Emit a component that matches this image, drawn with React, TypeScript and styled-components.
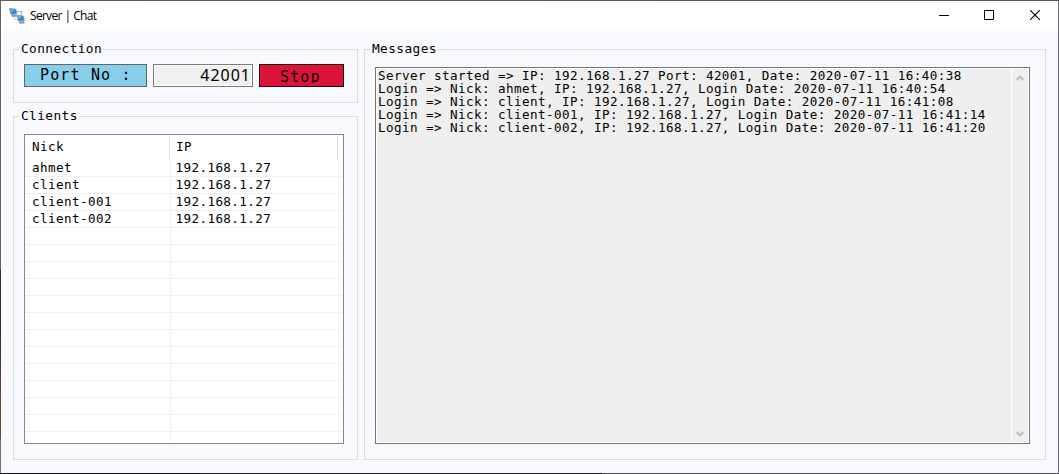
import React from 'react';
import styled, { createGlobalStyle } from 'styled-components';

const GlobalStyle = createGlobalStyle`
  * { box-sizing: border-box; }
  body { margin: 0; background: #f8f8ff; overflow: hidden; }
`;

const mono = `'DejaVu Sans Mono', 'Liberation Mono', monospace`;

const Desktop = styled.div`
  width: 1059px;
  height: 474px;
  padding: 1px;
  background:
    linear-gradient(90deg, #17171c 0 200px, #1b1b22 200px 250px, #1b1b22 250px 602px, #55555d 602px) left bottom / 100% 1px no-repeat,
    linear-gradient(#6b6155 0 270px, #3a2a22 270px 330px, #6a4632 400px 438px, #75705c 440px) left top / 1px 100% no-repeat,
    linear-gradient(90deg, #665b4e, #5c554e) left top / 100% 1px no-repeat,
    #6a6a72;
`;

const Window = styled.div`
  width: 1057px;
  height: 472px;
  display: flex;
  flex-direction: column;
  background: #f8f8ff;
`;

const TitleBar = styled.header`
  display: flex;
  align-items: center;
  height: 30px;
  padding-left: 8px;
  background: #fff;
`;

const Title = styled.span`
  flex: 1;
  margin-left: 4px;
  font: 12px/16px 'Open Sans', 'Noto Sans', sans-serif;
  letter-spacing: -0.7px;
  word-spacing: 0.4px;
  color: #000;
`;

const WindowButton = styled.span`
  display: flex;
  align-self: flex-start;
  width: 46px;
  height: 28px;
  align-items: center;
  justify-content: center;
`;

const Content = styled.main`
  display: flex;
  gap: 6px;
  padding: 18px 0 0 12px;
`;

const Column = styled.div`
  display: flex;
  flex-direction: column;
  gap: 13px;
`;

const Group = styled.section<{ $w: number; $h: number }>`
  width: ${(p) => p.$w}px;
  height: ${(p) => p.$h}px;
  border: 1px solid #dcdcdc;
  padding: 0 10px;
`;

const Legend = styled.h2`
  width: fit-content;
  height: 16px;
  margin: -9px 0 0 -5px;
  padding: 0 1px 0 2px;
  background: #f8f8ff;
  color: #000;
  font: 400 12.8px/16px ${mono};
  letter-spacing: 0.4px;
`;

const ConnectionRow = styled.div`
  display: flex;
  gap: 6px;
  margin-top: 7px;
`;

const Cell = styled.div`
  height: 23px;
  border: 1px solid #646464;
  color: #000;
  font: 15px/21px ${mono};
  letter-spacing: 1.15px;
  white-space: pre;
  overflow: hidden;
`;

const PortLabel = styled(Cell)`
  width: 123px;
  padding-left: 15px;
  background: #87ceeb;
`;

const PortField = styled(Cell)`
  width: 100px;
  padding-right: 1px;
  border-color: #7a7a7a;
  background: #f0f0f0;
  box-shadow: inset 0 0 0 1px #fff;
  text-align: right;
  font: 16px/20px 'Noto Sans', 'Open Sans', sans-serif;
  letter-spacing: 1px;
`;

const StopButton = styled(Cell)`
  width: 85px;
  padding: 1px 0 0 20px;
  border-color: #1c0208;
  background: #dc143c;
`;

const StopText = styled.span`
  display: block;
  height: 17px;
  line-height: 22px;
  overflow: hidden;
`;

const Table = styled.div`
  width: 320px;
  height: 310px;
  margin-top: 10px;
  padding: 1px;
  border: 1px solid #828790;
  background: #fff;
  color: #000;
  font: 12.6px/16px ${mono};
  letter-spacing: 0.415px;
  overflow: hidden;
`;

const HeaderRow = styled.div`
  display: flex;
  height: 24px;
`;

const HeaderCell = styled.div<{ $w: number }>`
  width: ${(p) => p.$w}px;
  padding: 3px 0 0 6px;
  border-right: 1px solid #e3e3e3;
`;

const Rows = styled.div`
  width: 316px;
`;

const Row = styled.div`
  display: flex;
  height: 17px;
  border-bottom: 1px solid #f0f0f0;
`;

const RowCell = styled.div<{ $w: number }>`
  width: ${(p) => p.$w}px;
  height: 17px;
  padding-left: ${(p) => (p.$w > 160 ? 4.4 : 6)}px;
  border-right: 1px solid #f0f0f0;
`;

const Log = styled.div`
  display: flex;
  width: 655px;
  height: 377px;
  margin-top: 10px;
  border: 1px solid #767676;
  padding: 1px;
  background: #fff;
`;

const LogText = styled.pre`
  width: 634px;
  margin: 0;
  padding-left: 1px;
  background: #efefef;
  color: #000;
  font: 12.6px/13px ${mono};
  letter-spacing: 0.415px;
`;

const Scrollbar = styled.div`
  display: flex;
  flex-direction: column;
  justify-content: space-between;
  align-items: center;
  width: 16px;
  margin-left: 1px;
  padding: 5px 0 4px;
  background: #efefef;
`;

const clients = ['ahmet', 'client', 'client-001', 'client-002'];
const tableRows = Array.from({ length: 17 }, (_, i) => clients[i] ?? '');

const messages = [
  'Server started => IP: 192.168.1.27 Port: 42001, Date: 2020-07-11 16:40:38',
  'Login => Nick: ahmet, IP: 192.168.1.27, Login Date: 2020-07-11 16:40:54',
  'Login => Nick: client, IP: 192.168.1.27, Login Date: 2020-07-11 16:41:08',
  'Login => Nick: client-001, IP: 192.168.1.27, Login Date: 2020-07-11 16:41:14',
  'Login => Nick: client-002, IP: 192.168.1.27, Login Date: 2020-07-11 16:41:20',
];

const Monitor = ({ x, y }: { x: number; y: number }) => (
  <g transform={`translate(${x} ${y})`}>
    <path d="M0 .4 6.4 1.2 7.3 6 1.3 6.3Z" fill="#2f86d2" stroke="#7f9cb4" strokeWidth=".8" />
    <path d="M1 1.2 4.5 1.5 2 5Z" fill="#6bb9ef" />
    <path d="M1.4 6.9 6.9 6.5 7.9 8.4 3 8.9Z" fill="#8d9397" />
  </g>
);

const AppIcon = () => (
  <svg width="17" height="16" viewBox="0 0 17 16">
    <path d="M8 3.5H12.5V7" fill="none" stroke="#a4abb1" strokeWidth="1" />
    <path d="M5.5 9V11.5H8" fill="none" stroke="#c9ced2" strokeWidth="1" />
    <Monitor x={0.5} y={0} />
    <Monitor x={8} y={6.8} />
  </svg>
);

const Chevron = ({ down }: { down?: boolean }) => (
  <svg width="8" height="8" viewBox="0 0 8 8">
    <path
      d={down ? 'M.7 2 4 5.4 7.3 2' : 'M.7 6 4 2.6 7.3 6'}
      fill="none"
      stroke="#bdbdbd"
      strokeWidth="2.2"
    />
  </svg>
);

export default function App() {
  return (
    <Desktop>
      <GlobalStyle />
      <Window>
        <TitleBar>
          <AppIcon />
          <Title>Server | Chat</Title>
          <WindowButton>
            <svg width="12" height="10"><path d="M2 5.5H12" stroke="#000" /></svg>
          </WindowButton>
          <WindowButton>
            <svg width="10" height="10"><path d="M.5.5H9.5V9.5H.5Z" fill="none" stroke="#000" /></svg>
          </WindowButton>
          <WindowButton>
            <svg width="10" height="10"><path d="M0 0 10 10M10 0 0 10" stroke="#000" strokeWidth="1.1" /></svg>
          </WindowButton>
        </TitleBar>
        <Content>
          <Column>
            <Group $w={345} $h={54}>
              <Legend>Connection</Legend>
              <ConnectionRow>
                <PortLabel>Port No :</PortLabel>
                <PortField>42001</PortField>
                <StopButton><StopText>Stop</StopText></StopButton>
              </ConnectionRow>
            </Group>
            <Group $w={345} $h={344}>
              <Legend>Clients</Legend>
              <Table>
                <HeaderRow>
                  <HeaderCell $w={144}>Nick</HeaderCell>
                  <HeaderCell $w={168}>IP</HeaderCell>
                </HeaderRow>
                <Rows>
                  {tableRows.map((nick, i) => (
                    <Row key={i}>
                      <RowCell $w={145}>{nick}</RowCell>
                      <RowCell $w={168}>{nick && '192.168.1.27'}</RowCell>
                    </Row>
                  ))}
                </Rows>
              </Table>
            </Group>
          </Column>
          <Group $w={682} $h={411}>
            <Legend>Messages</Legend>
            <Log>
              <LogText>{messages.join('\n')}</LogText>
              <Scrollbar>
                <Chevron />
                <Chevron down />
              </Scrollbar>
            </Log>
          </Group>
        </Content>
      </Window>
    </Desktop>
  );
}
